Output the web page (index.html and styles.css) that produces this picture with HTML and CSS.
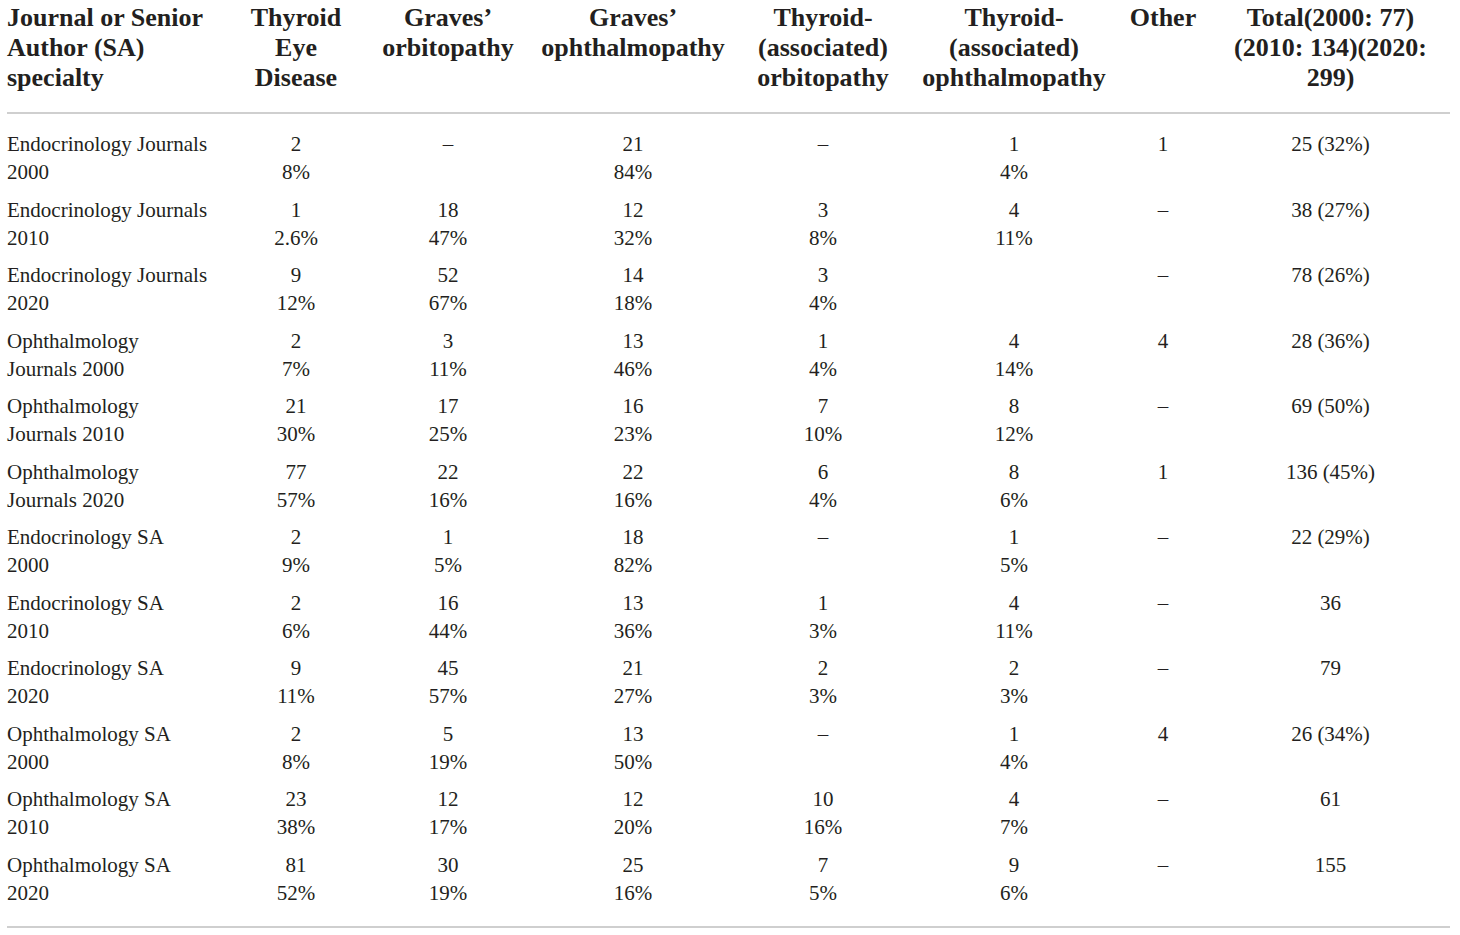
FILE: index.html
```html
<!DOCTYPE html>
<html>
<head>
<meta charset="utf-8">
<link rel="stylesheet" href="styles.css">
</head>
<body>
<table class="tbl">
<colgroup>
<col class="c1"><col class="c2"><col class="c3"><col class="c4"><col class="c5"><col class="c6"><col class="c7"><col class="c8">
</colgroup>
<thead>
<tr>
<th class="first">Journal or Senior<br>Author (SA)<br>specialty</th>
<th>Thyroid<br>Eye<br>Disease</th>
<th>Graves’<br>orbitopathy</th>
<th>Graves’<br>ophthalmopathy</th>
<th>Thyroid-<br>(associated)<br>orbitopathy</th>
<th>Thyroid-<br>(associated)<br>ophthalmopathy</th>
<th>Other</th>
<th>Total(2000: 77)<br>(2010: 134)(2020:<br>299)</th>
</tr>
</thead>
<tbody>
<tr class="top"><td class="first">Endocrinology Journals<br>2000</td><td>2<br>8%</td><td>–</td><td>21<br>84%</td><td>–</td><td>1<br>4%</td><td>1</td><td>25 (32%)</td></tr>
<tr><td class="first">Endocrinology Journals<br>2010</td><td>1<br>2.6%</td><td>18<br>47%</td><td>12<br>32%</td><td>3<br>8%</td><td>4<br>11%</td><td>–</td><td>38 (27%)</td></tr>
<tr><td class="first">Endocrinology Journals<br>2020</td><td>9<br>12%</td><td>52<br>67%</td><td>14<br>18%</td><td>3<br>4%</td><td></td><td>–</td><td>78 (26%)</td></tr>
<tr><td class="first">Ophthalmology<br>Journals 2000</td><td>2<br>7%</td><td>3<br>11%</td><td>13<br>46%</td><td>1<br>4%</td><td>4<br>14%</td><td>4</td><td>28 (36%)</td></tr>
<tr><td class="first">Ophthalmology<br>Journals 2010</td><td>21<br>30%</td><td>17<br>25%</td><td>16<br>23%</td><td>7<br>10%</td><td>8<br>12%</td><td>–</td><td>69 (50%)</td></tr>
<tr><td class="first">Ophthalmology<br>Journals 2020</td><td>77<br>57%</td><td>22<br>16%</td><td>22<br>16%</td><td>6<br>4%</td><td>8<br>6%</td><td>1</td><td>136 (45%)</td></tr>
<tr><td class="first">Endocrinology SA<br>2000</td><td>2<br>9%</td><td>1<br>5%</td><td>18<br>82%</td><td>–</td><td>1<br>5%</td><td>–</td><td>22 (29%)</td></tr>
<tr><td class="first">Endocrinology SA<br>2010</td><td>2<br>6%</td><td>16<br>44%</td><td>13<br>36%</td><td>1<br>3%</td><td>4<br>11%</td><td>–</td><td>36</td></tr>
<tr><td class="first">Endocrinology SA<br>2020</td><td>9<br>11%</td><td>45<br>57%</td><td>21<br>27%</td><td>2<br>3%</td><td>2<br>3%</td><td>–</td><td>79</td></tr>
<tr><td class="first">Ophthalmology SA<br>2000</td><td>2<br>8%</td><td>5<br>19%</td><td>13<br>50%</td><td>–</td><td>1<br>4%</td><td>4</td><td>26 (34%)</td></tr>
<tr><td class="first">Ophthalmology SA<br>2010</td><td>23<br>38%</td><td>12<br>17%</td><td>12<br>20%</td><td>10<br>16%</td><td>4<br>7%</td><td>–</td><td>61</td></tr>
<tr class="bottom"><td class="first">Ophthalmology SA<br>2020</td><td>81<br>52%</td><td>30<br>19%</td><td>25<br>16%</td><td>7<br>5%</td><td>9<br>6%</td><td>–</td><td>155</td></tr>
</tbody>
</table>
</body>
</html>
```

FILE: styles.css
```css
html, body {
  margin: 0;
  padding: 0;
  background: #ffffff;
}

.tbl {
  margin-left: 7px;
  width: 1443px;
  table-layout: fixed;
  border-collapse: collapse;
  font-family: "Liberation Serif", "Times New Roman", serif;
  color: #231f20;
}

.c1 { width: 222px; }
.c2 { width: 134px; }
.c3 { width: 170px; }
.c4 { width: 200px; }
.c5 { width: 180px; }
.c6 { width: 202px; }
.c7 { width: 96px; }
.c8 { width: 239px; }

.tbl th {
  font-size: 26px;
  font-weight: bold;
  line-height: 30px;
  text-align: center;
  vertical-align: top;
  padding: 3px 0 19px 0;
  border-bottom: 2px solid #cfcfcf;
  white-space: nowrap;
}

.tbl td {
  font-size: 21px;
  line-height: 28px;
  text-align: center;
  vertical-align: top;
  padding: 5px 0 4.5px 0;
  white-space: nowrap;
}

.tbl .first {
  text-align: left;
  padding-left: 0;
}

.tbl tr.top td {
  padding-top: 16px;
}

.tbl tr.bottom td {
  padding-bottom: 19px;
  border-bottom: 2px solid #cfcfcf;
}
```
